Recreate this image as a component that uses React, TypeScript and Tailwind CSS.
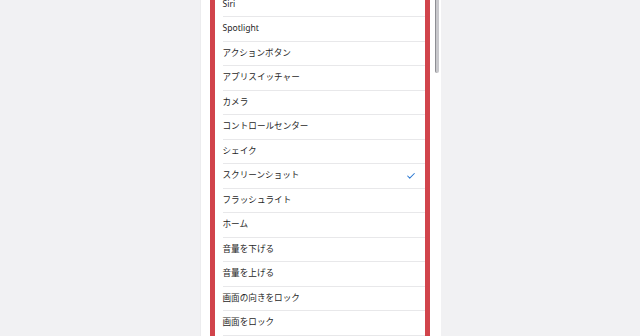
import { Check } from "lucide-react";

const items = [
  "Siri",
  "Spotlight",
  "アクションボタン",
  "アプリスイッチャー",
  "カメラ",
  "コントロールセンター",
  "シェイク",
  "スクリーンショット",
  "フラッシュライト",
  "ホーム",
  "音量を下げる",
  "音量を上げる",
  "画面の向きをロック",
  "画面をロック",
  "",
];

export default function App() {
  return (
    <div className="w-[640px] h-[336px] overflow-hidden bg-[#f1f1f3] flex justify-center">
      <div className="w-[241px] h-full bg-white flex border-l border-[#ececee]">
        <div className="ml-[9px] w-[220px] h-full border-x-[5px] border-[#d1444b] bg-white overflow-hidden">
          <div className="-mt-[7.5px] pl-[8px]">
            {items.map((t, i) => (
              <div
                key={i}
                className="h-[24.5px] flex items-center justify-between border-b border-[#e8e8ea] pr-[9px]"
                style={{ fontFamily: '"Noto Sans", "Noto Sans CJK JP", sans-serif' }}
              >
                <span className="text-[8.6px] text-[#1f1f1f] leading-none">{t}</span>
                {t === "スクリーンショット" && (
                  <Check className="w-[10px] h-[10px] text-[#2a78d2]" strokeWidth={2.5} />
                )}
              </div>
            ))}
          </div>
        </div>
        <div className="ml-[5px] w-[5px]">
          <div className="w-[4px] h-[73px] bg-[#c8c8cc] rounded-b-full border-l border-[#8e8e93]" />
        </div>
      </div>
    </div>
  );
}
